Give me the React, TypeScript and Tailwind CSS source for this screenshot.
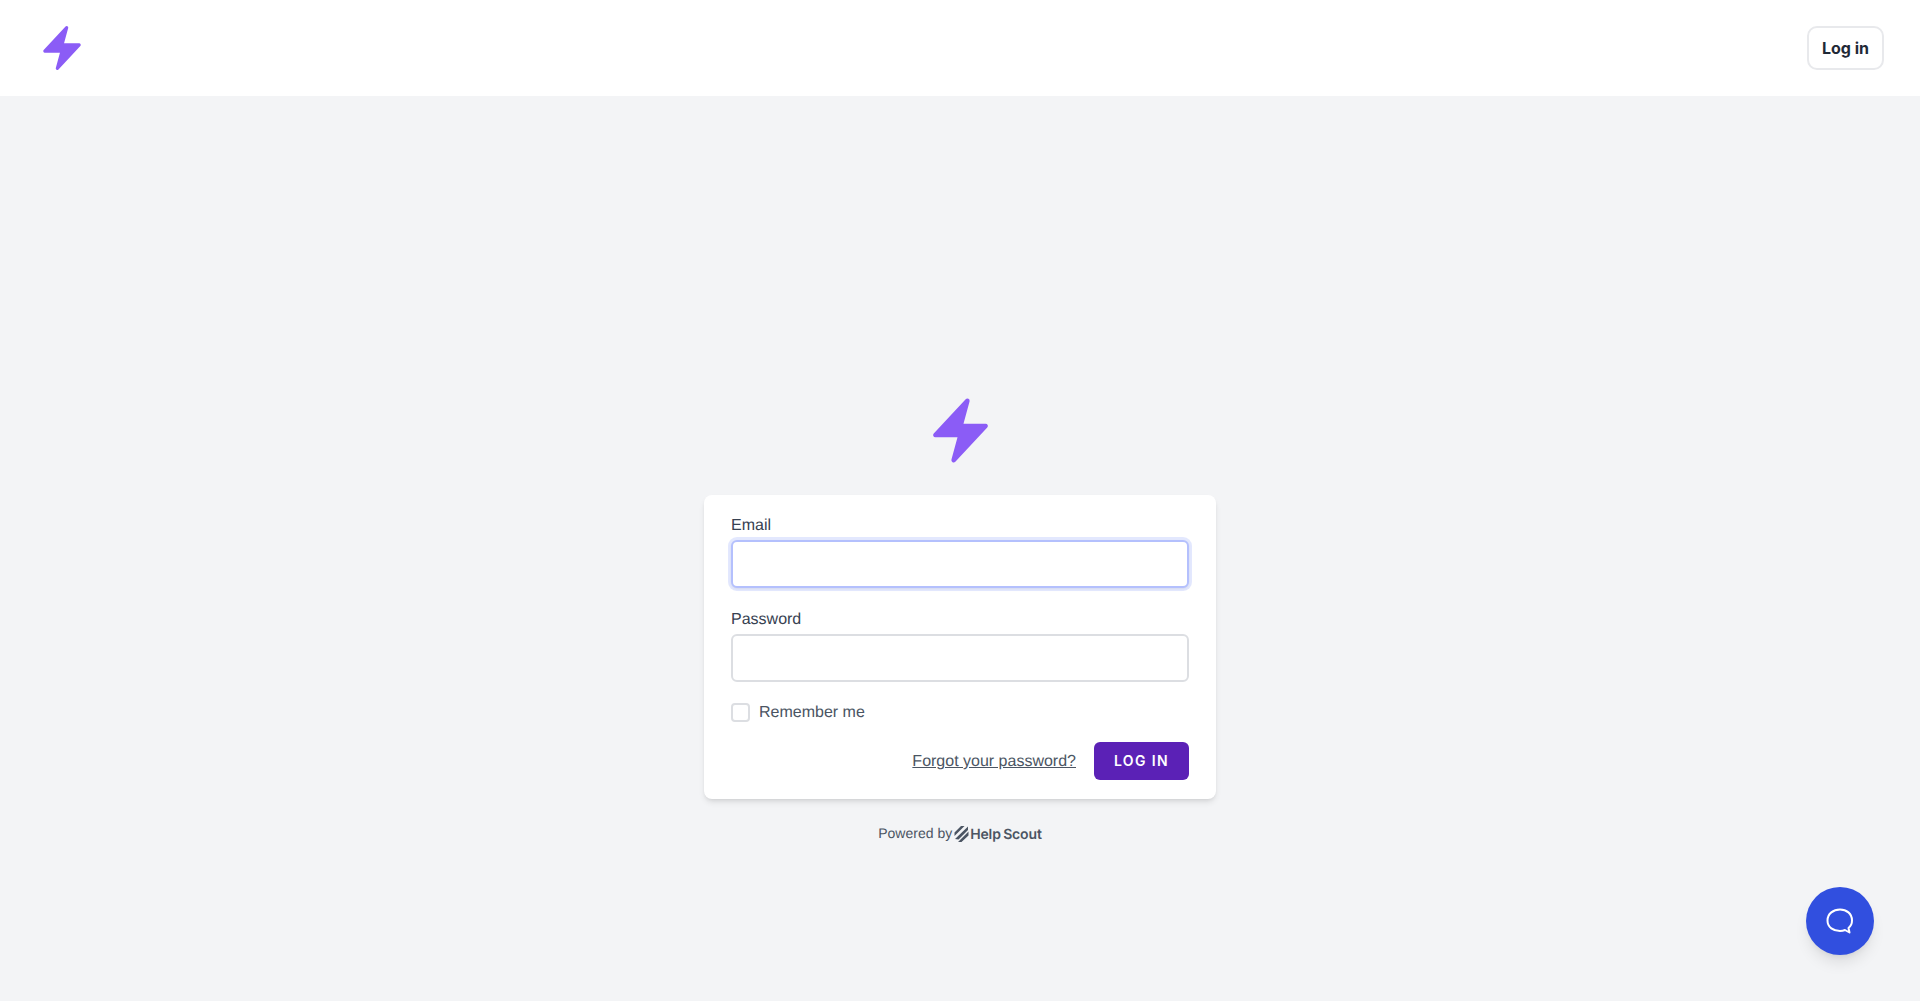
const BOLT =
  "M14.615 1.595a.75.75 0 01.359.852L12.982 9.75h7.268a.75.75 0 01.548 1.262l-10.5 11.25a.75.75 0 01-1.272-.71l1.992-7.302H3.75a.75.75 0 01-.548-1.262l10.5-11.25a.75.75 0 01.913-.143z";

function Bolt({ className }: { className: string }) {
  return (
    <svg viewBox="0 0 24 24" fill="#8b5cf6" className={className}>
      <path fillRule="evenodd" clipRule="evenodd" d={BOLT} />
    </svg>
  );
}

export default function App() {
  return (
    <div className="relative min-h-screen bg-[#f3f4f6] font-['Liberation_Sans',sans-serif] text-[#374151] [text-rendering:geometricPrecision]">
      <nav className="flex h-24 items-center justify-between bg-white pl-[37px] pr-9">
        <Bolt className="h-[50px] w-[50px]" />
        <button className="h-[44px] w-[77px] rounded-[10px] border-2 border-[#e8e9ec] bg-white font-['Inter',sans-serif] text-base font-bold text-[#1f2937]">
          Log in
        </button>
      </nav>

      <main className="flex flex-col items-center pt-[298px]">
        <Bolt className="h-[73px] w-[73px]" />

        <div className="mt-7 w-[512px] rounded-lg bg-white px-[27px] pb-[19px] pt-[17px] shadow-md">
          <form>
            <label className="block h-6 pt-[3px] text-base leading-[21px] text-[#374151]">Email</label>
            <input
              type="email"
              className="mt-1 block h-12 w-full rounded-md border-2 border-[#b4c0fd] bg-white px-3 shadow-sm outline-none ring-[3px] ring-[#c7d2fe]/50"
            />

            <label className="mt-[18px] block h-6 pt-[3px] text-base leading-[21px] text-[#374151]">Password</label>
            <input
              type="password"
              className="mt-1 block h-12 w-full rounded-md border-2 border-[#dcdee2] bg-white px-3 outline-none"
            />

            <label className="mt-[18px] flex h-6 items-center">
              <input
                type="checkbox"
                className="h-[19px] w-[19px] appearance-none rounded border-2 border-[#dcdee2] bg-white"
              />
              <span className="ml-[9px] pt-0.5 text-base leading-[22px] text-[#4b5563]">Remember me</span>
            </label>

            <div className="mt-[18px] flex items-center justify-end">
              <a href="#" className="pt-0.5 text-base leading-[22px] text-[#4b5563] underline">
                Forgot your password?
              </a>
              <button
                type="button"
                className="ml-[18px] h-[38px] w-[95px] rounded-md bg-[#5b21b6] font-['Inter',sans-serif] text-sm font-semibold uppercase tracking-widest text-white"
              >
                Log in
              </button>
            </div>
          </form>
        </div>

        <div className="mt-6 flex h-5 items-center text-sm text-[#4b5563]">
          <span>Powered by</span>
          <svg viewBox="0 0 14 16" fill="#4b5563" className="ml-0.5 mt-0.5 h-4 w-[15px]">
            <path d="M0 6.500 6.500 0h3.500L0 10z M0.500 13 13.500 0.500v3.500L4 13.500z M3.500 16 14 5.500v4L7 16z" />
          </svg>
          <span className="ml-px mt-[3px] font-['Inter',sans-serif] text-sm font-semibold tracking-[-0.01em] [word-spacing:-1px]">
            Help Scout
          </span>
        </div>
      </main>

      <button className="absolute bottom-[46px] right-[46px] flex h-[68px] w-[68px] items-center justify-center rounded-full bg-[#314fdf] shadow-lg">
        <svg viewBox="0 0 28 28" fill="none" stroke="white" strokeWidth="2" className="h-7 w-7">
          <path
            strokeLinejoin="round"
            d="M14 2.500C7.500 2.500 1.500 6.500 1.500 13.500S7.500 24 14 24c2 0 3.500-.3 5-1l4.500 2.500-1-4.500c2.500-2 3.500-5 3.500-7.500C26 6.500 20.500 2.500 14 2.500z"
          />
        </svg>
      </button>
    </div>
  );
}
